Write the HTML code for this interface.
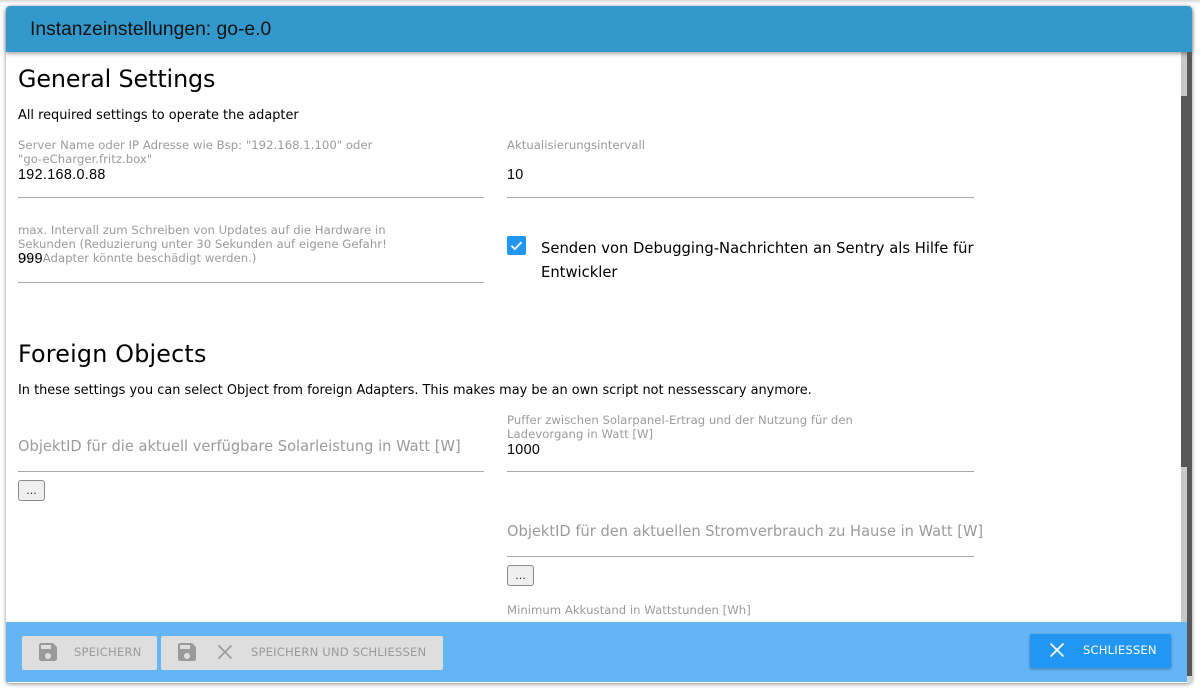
<!DOCTYPE html>
<html lang="de"><head><meta charset="utf-8"><title>Instanzeinstellungen</title>
<style>
html,body{margin:0;padding:0;width:1200px;height:690px;overflow:hidden;background:#fff}
*{box-sizing:border-box}
.a{position:absolute;white-space:nowrap}
body{font-family:"DejaVu Sans","Liberation Sans",sans-serif;color:#000}
#top{left:0;top:0;width:1200px;height:4px;background:linear-gradient(#d8d8d8,#fff)}
#dlg{left:6px;top:6px;width:1186px;height:677px;background:#fff;border-radius:4px;box-shadow:0 1px 4px rgba(0,0,0,.45);overflow:hidden}
#hd{left:6px;top:6px;width:1186px;height:46px;background:#3399cc;border-radius:4px 4px 0 0;box-shadow:0 2px 4px rgba(0,0,0,.35);z-index:3}
#hd span{position:absolute;left:24px;top:13px;font:19.3px/22px "Liberation Sans",sans-serif;color:#111}
#ft{left:6px;top:622px;width:1186px;height:60px;background:#64b5f6;z-index:3}
.h{font-size:23.8px;line-height:30px;left:18px}
.t{font-size:12.9px;line-height:16px;left:18px}
.l{font-size:11.65px;line-height:14px;color:#9b9b9b;letter-spacing:.03px}
.v{font-size:14.3px;line-height:18px;font-family:"Liberation Sans",sans-serif;color:#000;letter-spacing:.35px}
.p{font-size:14.65px;line-height:18px;color:#9b9b9b}
.u{height:1px;background:#a8a8a8}
.b{width:27px;height:21px;border:1px solid #8a8a8a;border-radius:3px;background:#efefef;font-size:11px;line-height:20px;text-align:center;color:#222}
.btn{top:636px;height:34px;background:#dedede;border-radius:2px;z-index:4}
.bt{font-size:11.6px;line-height:14px;color:#9a9a9a;letter-spacing:.16px;z-index:5;top:645px}
svg{position:absolute;z-index:5}
</style></head><body>
<div class="a" id="top"></div>
<div class="a" id="dlg"></div>
<div class="a" id="hd"><span>Instanzeinstellungen: go-e.0</span></div>

<div class="a" style="left:1181px;top:52px;width:6px;height:570px;background:#c9c9c9;z-index:2"></div>
<div class="a" style="left:1187px;top:52px;width:5px;height:630px;background:#585858;z-index:4"></div>
<div class="a" style="left:1181px;top:96px;width:11px;height:371px;background:#585858;z-index:2"></div>
<div class="a" style="left:1187px;top:676px;width:5px;height:7px;background:#d4d4d4;z-index:5"></div>

<div class="a h" style="top:64px;letter-spacing:-.1px">General Settings</div>
<div class="a t" style="top:108px">All required settings to operate the adapter</div>

<div class="a l" style="left:18px;top:138px">Server Name oder IP Adresse wie Bsp: "192.168.1.100" oder</div>
<div class="a l" style="left:18px;top:152px">"go-eCharger.fritz.box"</div>
<div class="a v" style="left:18px;top:166px">192.168.0.88</div>
<div class="a u" style="left:18px;top:197px;width:466px"></div>

<div class="a l" style="left:507px;top:138px">Aktualisierungsintervall</div>
<div class="a v" style="left:507px;top:166px">10</div>
<div class="a u" style="left:507px;top:197px;width:467px"></div>

<div class="a l" style="left:18px;top:223px">max. Intervall zum Schreiben von Updates auf die Hardware in</div>
<div class="a l" style="left:18px;top:237px">Sekunden (Reduzierung unter 30 Sekunden auf eigene Gefahr!</div>
<div class="a l" style="left:18px;top:251px">Der Adapter könnte beschädigt werden.)</div>
<div class="a v" style="left:18px;top:250px">999</div>
<div class="a u" style="left:18px;top:282px;width:466px"></div>

<div class="a" style="left:507px;top:236px;width:19px;height:19px;background:#2196f3;border-radius:2px"></div>
<svg style="left:507px;top:236px" width="19" height="19" viewBox="0 0 19 19"><path d="M4.5 9.8l3.3 3.3 6.7-7" fill="none" stroke="#fff" stroke-width="1.8"/></svg>
<div class="a" style="left:541px;top:237px;font-size:14.75px;line-height:24px">Senden von Debugging-Nachrichten an Sentry als Hilfe für<br>Entwickler</div>

<div class="a h" style="top:339px;letter-spacing:.2px">Foreign Objects</div>
<div class="a t" style="top:383px">In these settings you can select Object from foreign Adapters. This makes may be an own script not nessesscary anymore.</div>

<div class="a p" style="left:18px;top:438px">ObjektID für die aktuell verfügbare Solarleistung in Watt [W]</div>
<div class="a u" style="left:18px;top:471px;width:466px"></div>
<div class="a b" style="left:18px;top:480px">...</div>

<div class="a l" style="left:507px;top:413px">Puffer zwischen Solarpanel-Ertrag und der Nutzung für den</div>
<div class="a l" style="left:507px;top:427px">Ladevorgang in Watt [W]</div>
<div class="a v" style="left:507px;top:441px">1000</div>
<div class="a u" style="left:507px;top:471px;width:467px"></div>

<div class="a p" style="left:507px;top:523px">ObjektID für den aktuellen Stromverbrauch zu Hause in Watt [W]</div>
<div class="a u" style="left:507px;top:556px;width:467px"></div>
<div class="a b" style="left:507px;top:565px">...</div>
<div class="a l" style="left:507px;top:603px">Minimum Akkustand in Wattstunden [Wh]</div>

<div class="a" id="ft"></div>
<div class="a btn" style="left:22px;width:135px"></div>
<svg style="left:36px;top:640px" width="24" height="24" viewBox="0 0 24 24"><path fill="#9a9a9a" d="M17 3H5c-1.1 0-2 .9-2 2v14c0 1.1.9 2 2 2h14c1.1 0 2-.9 2-2V7l-4-4zm-5 16c-1.66 0-3-1.34-3-3s1.34-3 3-3 3 1.34 3 3-1.34 3-3 3zm3-10H5V5h10v4z"/></svg>
<div class="a bt" style="left:74px">SPEICHERN</div>

<div class="a btn" style="left:161px;width:282px"></div>
<svg style="left:175px;top:640px" width="24" height="24" viewBox="0 0 24 24"><path fill="#9a9a9a" d="M17 3H5c-1.1 0-2 .9-2 2v14c0 1.1.9 2 2 2h14c1.1 0 2-.9 2-2V7l-4-4zm-5 16c-1.66 0-3-1.34-3-3s1.34-3 3-3 3 1.34 3 3-1.34 3-3 3zm3-10H5V5h10v4z"/></svg>
<svg style="left:213px;top:640px" width="24" height="24" viewBox="0 0 24 24"><path fill="none" stroke="#9a9a9a" stroke-width="1.6" d="M5.5 5.5l13 13M18.5 5.5l-13 13"/></svg>
<div class="a bt" style="left:251px">SPEICHERN UND SCHLIESSEN</div>

<div class="a btn" style="left:1030px;top:634px;width:141px;height:34px;background:#2196f3;box-shadow:0 1px 3px rgba(0,0,0,.35)"></div>
<svg style="left:1045px;top:638px" width="24" height="24" viewBox="0 0 24 24"><path fill="none" stroke="#fff" stroke-width="1.8" d="M5.5 5.5l13 13M18.5 5.5l-13 13"/></svg>
<div class="a bt" style="left:1083px;top:643px;color:#fff">SCHLIESSEN</div>
</body></html>
